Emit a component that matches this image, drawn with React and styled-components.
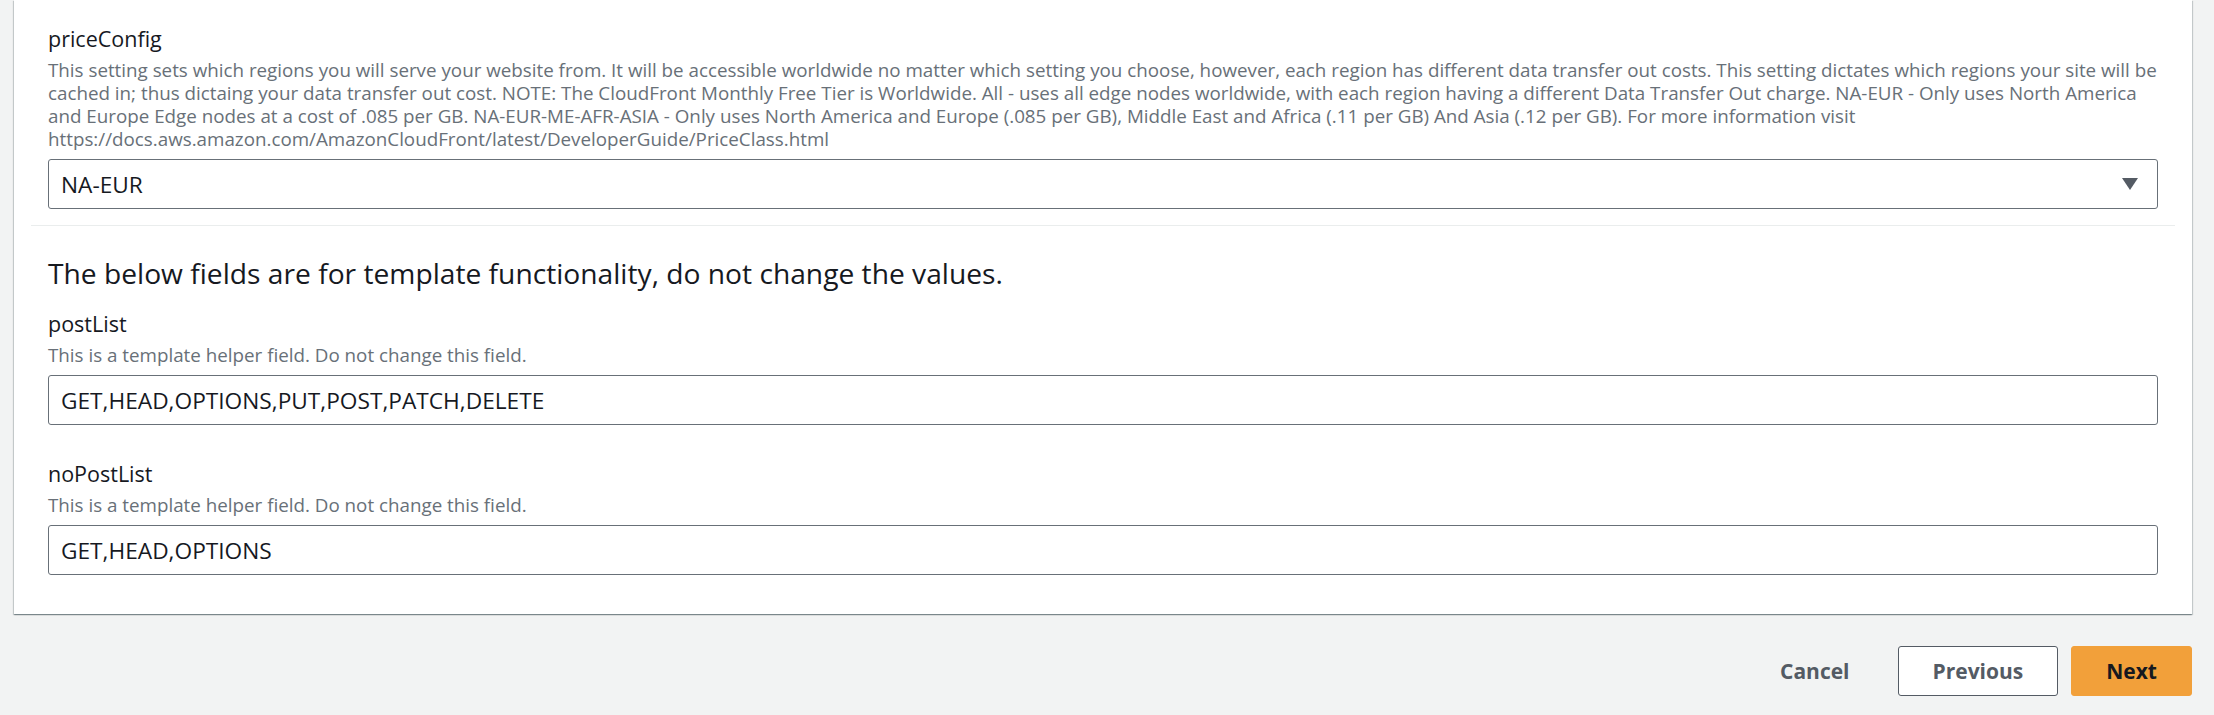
import styled, { createGlobalStyle } from 'styled-components';

const GlobalStyle = createGlobalStyle`
  body {
    margin: 0;
    background: #f2f3f3;
    font-family: "Open Sans", "Noto Sans", sans-serif;
    color: #16191f;
  }
`;

const DESCRIPTION = [
  'This setting sets which regions you will serve your website from. It will be accessible worldwide no matter which setting you choose, however, each region has different data transfer out costs. This setting dictates which regions your site will be',
  'cached in; thus dictaing your data transfer out cost. NOTE: The CloudFront Monthly Free Tier is Worldwide. All - uses all edge nodes worldwide, with each region having a different Data Transfer Out charge. NA-EUR - Only uses North America',
  'and Europe Edge nodes at a cost of .085 per GB. NA-EUR-ME-AFR-ASIA - Only uses North America and Europe (.085 per GB), Middle East and Africa (.11 per GB) And Asia (.12 per GB). For more information visit',
  'https://docs.aws.amazon.com/AmazonCloudFront/latest/DeveloperGuide/PriceClass.html',
];

const helperFields = [
  { name: 'postList', value: 'GET,HEAD,OPTIONS,PUT,POST,PATCH,DELETE' },
  { name: 'noPostList', value: 'GET,HEAD,OPTIONS' },
];

export default function App() {
  return (
    <>
      <GlobalStyle />
      <Page>
        <Card>
          <Section>
            <Field>
              <Label>priceConfig</Label>
              <Description>
                {DESCRIPTION.map((line) => (
                  <span key={line}>{line}</span>
                ))}
              </Description>
              <SelectBox>
                <span>NA-EUR</span>
                <svg width="16" height="12" viewBox="0 0 16 12">
                  <path d="M0 0 H16 L8 12 Z" fill="#545b64" />
                </svg>
              </SelectBox>
            </Field>
          </Section>
          <Divider />
          <Section $bottom>
            <Heading>The below fields are for template functionality, do not change the values.</Heading>
            <FieldList>
              {helperFields.map((f) => (
                <Field key={f.name}>
                  <Label>{f.name}</Label>
                  <Description>
                    <span>This is a template helper field. Do not change this field.</span>
                  </Description>
                  <TextInput readOnly value={f.value} />
                </Field>
              ))}
            </FieldList>
          </Section>
        </Card>
        <Actions>
          <Button $variant="link">Cancel</Button>
          <Button>Previous</Button>
          <Button $variant="primary">Next</Button>
        </Actions>
      </Page>
    </>
  );
}

const Page = styled.div`
  padding: 0 22px 0 14px;
`;

const Card = styled.div`
  background: #ffffff;
  padding: 0 17px 39px;
  box-shadow: 0 1px 1px 0 rgba(0, 28, 36, 0.3), 1px 1px 1px 0 rgba(0, 28, 36, 0.15),
    -1px 1px 1px 0 rgba(0, 28, 36, 0.15);
`;

const Section = styled.div`
  padding: ${(p) => (p.$bottom ? '31px 17px 0' : '25px 17px 16px')};
`;

const Divider = styled.div`
  height: 1px;
  background: #eaeded;
`;

const Heading = styled.h2`
  margin: 0 0 21px;
  font-size: 28.2px;
  line-height: 32px;
  font-weight: 400;
  color: #16191f;
`;

const FieldList = styled.div`
  display: flex;
  flex-direction: column;
  gap: 35px;
`;

const Field = styled.div`
  display: flex;
  flex-direction: column;
`;

const Label = styled.div`
  font-size: 21.5px;
  line-height: 28px;
  color: #16191f;
`;

const Description = styled.div`
  margin-top: 6px;
  display: flex;
  flex-direction: column;
  font-size: 18.8px;
  line-height: 23px;
  color: #687078;
  white-space: nowrap;
`;

const controlBase = `
  box-sizing: border-box;
  width: 100%;
  height: 50px;
  margin-top: 8px;
  border: 1px solid #687078;
  border-radius: 3px;
  background: #ffffff;
  font-family: "Open Sans", "Noto Sans", sans-serif;
  font-size: 22.7px;
  color: #16191f;
`;

const SelectBox = styled.div`
  ${controlBase}
  display: flex;
  align-items: center;
  justify-content: space-between;
  padding: 0 19px 0 12px;
`;

const TextInput = styled.input`
  ${controlBase}
  display: block;
  padding: 0 12px;
  outline: none;
`;

const Actions = styled.div`
  display: flex;
  justify-content: flex-end;
  gap: 13px;
  margin-top: 32px;
`;

const Button = styled.button`
  box-sizing: border-box;
  height: 50px;
  padding: 0 34px;
  border-radius: 3px;
  font-family: "Open Sans", "Noto Sans", sans-serif;
  font-size: 21px;
  font-weight: 700;
  cursor: pointer;
  border: 1px solid
    ${(p) => (p.$variant === 'primary' ? '#f2a03a' : p.$variant === 'link' ? 'transparent' : '#545b64')};
  background: ${(p) => (p.$variant === 'primary' ? '#f2a03a' : p.$variant === 'link' ? 'transparent' : '#ffffff')};
  color: ${(p) => (p.$variant === 'primary' ? '#16191f' : '#545b64')};
`;
